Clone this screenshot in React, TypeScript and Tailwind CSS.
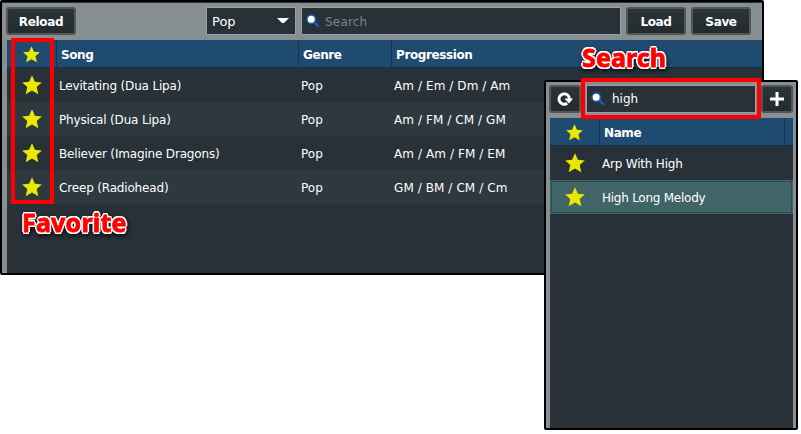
import type { ReactNode } from "react";

const songs = [
  ["Levitating (Dua Lipa)", "Pop", "Am / Em / Dm / Am"],
  ["Physical (Dua Lipa)", "Pop", "Am / FM / CM / GM"],
  ["Believer (Imagine Dragons)", "Pop", "Am / Am / FM / EM"],
  ["Creep (Radiohead)", "Pop", "GM / BM / CM / Cm"],
];

function Star({ size = 20 }: { size?: number }) {
  return (
    <svg width={size} height={size} viewBox="0 0 20 20" className="block shrink-0">
      <path d="M10 0.2 12.9 6.8 19.8 7.4 14.7 12 16.3 19.2 10 15.6 3.7 19.2 5.3 12 0.2 7.4 7.1 6.8Z" fill="#e8e800" />
    </svg>
  );
}

function Magnifier() {
  return (
    <svg width="14" height="14" viewBox="0 0 14 14" className="block shrink-0">
      <path d="M8 8 12 12" stroke="#1c5bc4" strokeWidth="2.4" strokeLinecap="round" />
      <circle cx="5.2" cy="5.2" r="4.2" fill="#fff" stroke="#1c5bc4" strokeWidth="1.4" />
    </svg>
  );
}

function Button({ className, children }: { className: string; children: ReactNode }) {
  return (
    <button className={`flex h-7 shrink-0 items-center justify-center rounded-[3px] border-2 border-[#535556] bg-linear-to-b from-[#29353a] to-[#222b30] font-bold tracking-[-0.35px] text-white ${className}`}>
      {children}
    </button>
  );
}

function Callout({ className, children }: { className: string; children: string }) {
  return (
    <div
      className={`absolute font-['Noto_Sans',sans-serif] text-[25px] font-bold whitespace-nowrap text-[#f00] [-webkit-text-stroke:0.8px_#f00] [text-shadow:2px_0_white,-2px_0_white,0_2px_white,0_-2px_white,1px_1px_white,-1px_1px_white,1px_-1px_white,-1px_-1px_white,1px_2px_white,-1px_2px_white,1px_-2px_white,-1px_-2px_white] [filter:drop-shadow(1px_2px_2px_rgb(0_0_0/.7))] ${className}`}
    >
      {children}
    </div>
  );
}

export default function App() {
  return (
    <div className="relative h-[434px] w-[801px] overflow-hidden bg-white font-['DejaVu_Sans',sans-serif] text-[12px] leading-none text-white">
      <section className="absolute top-0 left-0 flex h-[275px] w-[764px] flex-col rounded-[2px] border-2 border-black bg-[#888f92]">
        <div className="flex h-[38px] shrink-0 items-center border-t border-[#263239] pr-[11px] pb-px pl-1">
          <Button className="w-[70px] pt-px">Reload</Button>
          <div className="ml-[130px] flex h-7 w-[90px] items-center justify-between border border-[#999fa2] bg-[#273137] pr-[6px] pl-[5px]">
            <span className="pt-px text-[13px]">Pop</span>
            <svg width="12" height="6" viewBox="0 0 12 6"><path d="M0 0H12L7 5H5Z" fill="white" /></svg>
          </div>
          <div className="ml-[5px] flex h-7 w-[320px] items-center gap-[5px] border border-[#999fa2] bg-[#273137] pl-1 text-[#7d8487]">
            <Magnifier /><span className="pt-px tracking-[0.2px]">Search</span>
          </div>
          <Button className="ml-auto w-[60px] pt-px">Load</Button>
          <Button className="ml-[5px] w-[60px] pt-px">Save</Button>
        </div>
        <div className="ml-[5px] flex flex-1 flex-col bg-[#273137]">
          <div className="flex h-7 shrink-0 items-center border-b border-[#14324b] bg-[#204b70] font-bold tracking-[-0.4px]">
            <div className="flex h-full w-[50px] items-center justify-center border-r border-[#153552] pt-[2px]"><Star size={17} /></div>
            <div className="flex h-full w-[242px] items-center border-r border-[#153552] pt-[2px] pl-1">Song</div>
            <div className="flex h-full w-[93px] items-center border-r border-[#153552] pt-[2px] pl-1">Genre</div>
            <div className="pt-[2px] pl-1">Progression</div>
          </div>
          {songs.map(([song, genre, chords]) => (
            <div key={song} className="flex h-[34px] shrink-0 items-center even:bg-[#273137] odd:bg-[#2d383f]">
              <div className="flex w-[50px] justify-center"><Star /></div>
              <div className="w-[242px] pt-[2px] pl-[2px] tracking-[-0.17px]">{song}</div>
              <div className="w-[93px] pt-[2px] pl-[2px]">{genre}</div>
              <div className="pt-[2px] pl-[2px] tracking-[0.08px]">{chords}</div>
            </div>
          ))}
        </div>
      </section>
      <div className="absolute top-[38px] left-[11px] h-[166px] w-[43px] rounded-[1px] border-4 border-[#f00]" />
      <Callout className="top-[210px] left-[22px] tracking-[0.2px]">Favorite</Callout>

      <section className="absolute top-[80px] left-[544px] flex h-[350px] w-[254px] flex-col rounded-[2px] border-2 border-black bg-[#888f92]">
        <div className="flex h-9 shrink-0 items-center pr-[3px] pb-[2px] pl-[3px]">
          <Button className="w-8">
            <svg width="18" height="18" viewBox="0 0 18 18" className="mr-px"><path d="M11.2 13.3A5.2 5.2 0 1 1 13.4 9" fill="none" stroke="white" strokeWidth="2.9" /><path d="M8.5 8.5H17.2L12.9 13.5Z" fill="white" /></svg>
          </Button>
          <div className="ml-[5px] flex h-7 w-[170px] items-center gap-[7px] border border-[#999fa2] bg-[#273137] pl-1">
            <Magnifier /><span>high</span>
          </div>
          <Button className="ml-auto w-8">
            <svg width="14" height="14" viewBox="0 0 14 14"><path d="M7 0V14M0 7H14" stroke="white" strokeWidth="3" /></svg>
          </Button>
        </div>
        <div className="mr-[3px] ml-1 flex flex-1 flex-col bg-[#273137]">
          <div className="flex h-7 shrink-0 items-center border-b border-[#14324b] bg-[#204b70] font-bold tracking-[-0.4px]">
            <div className="flex h-full w-[50px] items-center justify-center border-r border-[#153552] pt-[2px]"><Star size={17} /></div>
            <div className="flex h-full w-[185px] items-center border-r border-[#153552] pt-[2px] pl-1">Name</div>
          </div>
          <div className="flex h-[34px] shrink-0 items-center">
            <div className="flex w-[50px] justify-center"><Star /></div><div className="pt-[2px] pl-[2px] tracking-[-0.2px]">Arp With High</div>
          </div>
          <div className="flex h-[34px] shrink-0 items-center bg-[#406467] outline -outline-offset-2 outline-[#2c4d50]">
            <div className="flex w-[50px] justify-center"><Star /></div><div className="pt-[2px] pl-[2px] tracking-[-0.25px]">High Long Melody</div>
          </div>
        </div>
      </section>
      <div className="absolute top-[78px] left-[581px] h-[41px] w-[180px] rounded-[1px] border-4 border-[#f00]" />
      <Callout className="top-[45px] left-[582px] tracking-[0.1px]">Search</Callout>
    </div>
  );
}
